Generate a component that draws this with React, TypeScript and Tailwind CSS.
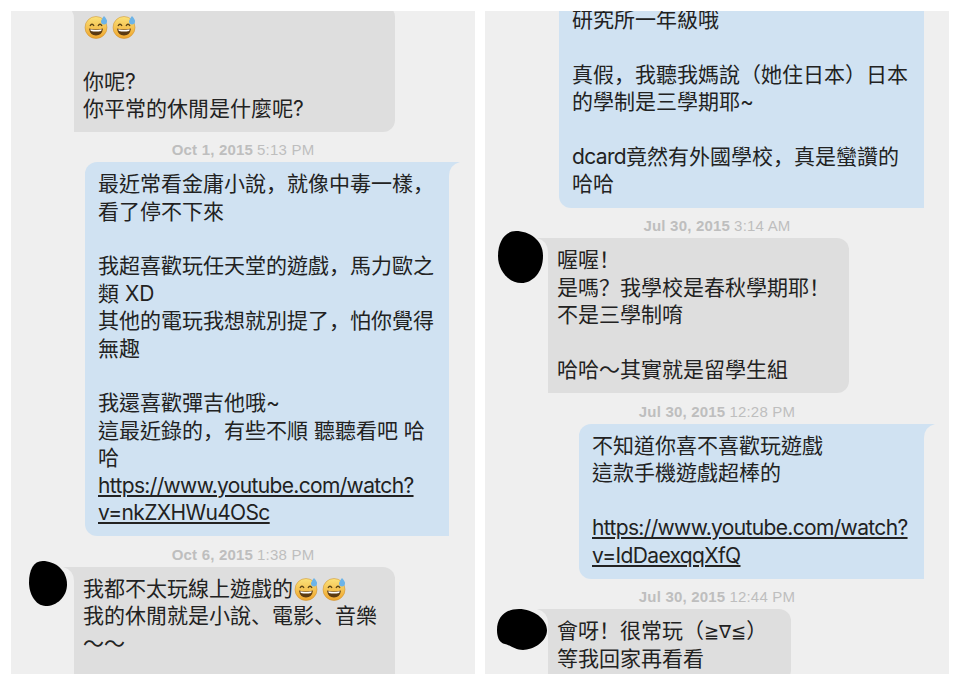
const font = "font-['Inter','Noto_Sans_CJK_TC',sans-serif]";

// the phone set its punctuation in the lower-left corner, which the TC font doesn't do
function Zh({ text }: { text: string }) {
  return (
    <>
      {text.split(/([，！？、])/).map((part, i) =>
        i % 2 === 1 ? (
          <span key={i} className="leading-[0] font-['Noto_Sans_CJK_SC',sans-serif]">{part}</span>
        ) : (
          part
        )
      )}
    </>
  );
}

function SweatSmile() {
  return (
    <svg viewBox="0 0 24 24" className="inline-block w-[24px] h-[24px] align-[-5px] ml-[1px] mr-[3px]">
      <defs>
        <linearGradient id="face" x1="0" y1="0" x2="0" y2="1">
          <stop offset="0" stopColor="#fbe27a" />
          <stop offset="1" stopColor="#efa52c" />
        </linearGradient>
      </defs>
      <circle cx="12" cy="12.5" r="11" fill="url(#face)" stroke="#c98a2a" strokeWidth="0.5" />
      <path d="M6 11 Q8 7.5 10 11" fill="none" stroke="#5b4314" strokeWidth="1.3" />
      <path d="M14 11 Q16 7.5 18 11" fill="none" stroke="#5b4314" strokeWidth="1.3" />
      <path d="M5 13.5 Q12 15.5 19 13.5 Q18 20.5 12 20.5 Q6 20.5 5 13.5 Z" fill="#5b3a12" />
      <path d="M6.3 14.3 Q12 15.8 17.7 14.3 L17.2 16 Q12 17 6.8 16 Z" fill="#fff" />
      <path d="M20 1 Q23.5 5 23 6.5 A3 3 0 0 1 17 6.5 Q17 5 20 1 Z" fill="#6cb4e8" />
    </svg>
  );
}

function Blob({ className, d }: { className: string; d: string }) {
  return (
    <svg viewBox="0 0 50 50" preserveAspectRatio="none" className={`absolute ${className}`}>
      <path d={d} fill="#000" />
    </svg>
  );
}

function Stamp({ day, time }: { day: string; time: string }) {
  return (
    <div className="h-[30.5px] pt-[6px] flex items-center justify-center gap-[4px] text-[15px] tracking-[0.2px] font-['Liberation_Sans',sans-serif] text-[#bebebe]">
      <span className="font-bold">{day}</span>
      <span>{time}</span>
    </div>
  );
}

function Link({ text }: { text: string }) {
  return <span className="underline tracking-[-0.65px]">{text}</span>;
}

function Sent({ className, children }: { className: string; children: React.ReactNode }) {
  return (
    <div className={`relative shrink-0 bg-[#d0e2f2] rounded-l-[12px] pl-[13px] pt-[8px] pb-[10px] whitespace-pre-line ${className}`}>
      <svg viewBox="0 0 11 14" className="absolute left-full top-0 w-[11px] h-[14px]">
        <path d="M0 0 H11 Q0 3 0 14 Z" fill="#d0e2f2" />
      </svg>
      {children}
    </div>
  );
}

function Received({ className, children }: { className: string; children: React.ReactNode }) {
  return (
    <div className={`relative shrink-0 bg-[#dedede] rounded-r-[12px] pl-[9px] pt-[8px] whitespace-pre-line ${className}`}>
      <svg viewBox="0 0 11 14" className="absolute right-full top-0 w-[11px] h-[14px]">
        <path d="M11 0 H0 Q11 3 11 14 Z" fill="#dedede" />
      </svg>
      {children}
    </div>
  );
}

export default function App() {
  return (
    <main className={`w-[960px] h-[685px] bg-white p-[11px] grid grid-cols-2 gap-[10px] text-[21px] leading-[27.4px] text-[#222] ${font}`}>
      {/* Left screenshot */}
      <section className="h-[663px] bg-[#efefef] overflow-hidden flex flex-col">
        <Received className="ml-[63px] w-[321px] -mt-[6px] pb-[9px]">
          <SweatSmile />
          <SweatSmile />
          {"\n\n你呢?\n你平常的休閒是什麼呢?"}
        </Received>
        <Stamp day="Oct 1, 2015" time="5:13 PM" />
        <Sent className="ml-[74px] w-[364px]">
          <Zh text={"最近常看金庸小說，就像中毒一樣，\n看了停不下來\n\n我超喜歡玩任天堂的遊戲，馬力歐之\n類 XD\n其他的電玩我想就別提了，怕你覺得\n無趣\n\n我還喜歡彈吉他哦~\n這最近錄的，有些不順 聽聽看吧 哈\n哈\n"} />
          <Link text={"https://www.youtube.com/watch?\nv=nkZXHWu4OSc"} />
        </Sent>
        <Stamp day="Oct 6, 2015" time="1:38 PM" />
        <Received className="ml-[63px] w-[321px] pb-[10px]">
          <Blob className="-left-[45px] -top-[6px] w-[38px] h-[45px]" d="M18 0 C34 0 50 10 50 26 C50 40 36 50 22 50 C8 50 0 36 0 24 C0 10 6 0 18 0 Z" />
          我都不太玩線上遊戲的
          <SweatSmile />
          <SweatSmile />
          <Zh text={"\n我的休閒就是小說、電影、音樂\n～～\n\n"} />
        </Received>
      </section>

      {/* Right screenshot */}
      <section className="h-[663px] bg-[#efefef] overflow-hidden flex flex-col">
        <Sent className="ml-[74px] w-[365px] -mt-[13px]">
          <Zh text={"研究所一年級哦\n\n真假，我聽我媽說（她住日本）日本\n的學制是三學期耶~\n\n"} />
          <span className="tracking-[-0.65px]">dcard</span>
          <Zh text={"竟然有外國學校，真是蠻讚的\n哈哈"} />
        </Sent>
        <Stamp day="Jul 30, 2015" time="3:14 AM" />
        <Received className="ml-[63px] w-[301px] pb-[10px]">
          <Blob className="-left-[50px] -top-[7px] w-[45px] h-[52px]" d="M20 0 C34 0 50 8 50 24 C50 40 38 50 26 50 C12 50 0 38 0 24 C0 10 8 0 20 0 Z" />
          <Zh text={"喔喔！\n是嗎？我學校是春秋學期耶！\n不是三學制唷\n\n哈哈～其實就是留學生組"} />
        </Received>
        <Stamp day="Jul 30, 2015" time="12:28 PM" />
        <Sent className="ml-[94px] w-[345px]">
          {"不知道你喜不喜歡玩遊戲\n這款手機遊戲超棒的\n\n"}
          <Link text={"https://www.youtube.com/watch?\nv=IdDaexqqXfQ"} />
        </Sent>
        <Stamp day="Jul 30, 2015" time="12:44 PM" />
        <Received className="ml-[63px] w-[243px] pb-[10px]">
          <Blob className="-left-[51px] top-0 w-[50px] h-[41px]" d="M22 0 C36 0 50 12 50 26 C50 40 36 50 26 50 C18 50 14 44 6 42 C2 40 0 34 0 26 C0 10 8 0 22 0 Z" />
          <Zh text="會呀！很常玩（" />
          <span className="leading-[0] text-[18px] font-['DejaVu_Sans',sans-serif]">≧∇≦</span>
          {"）\n等我回家再看看"}
        </Received>
      </section>
    </main>
  );
}
